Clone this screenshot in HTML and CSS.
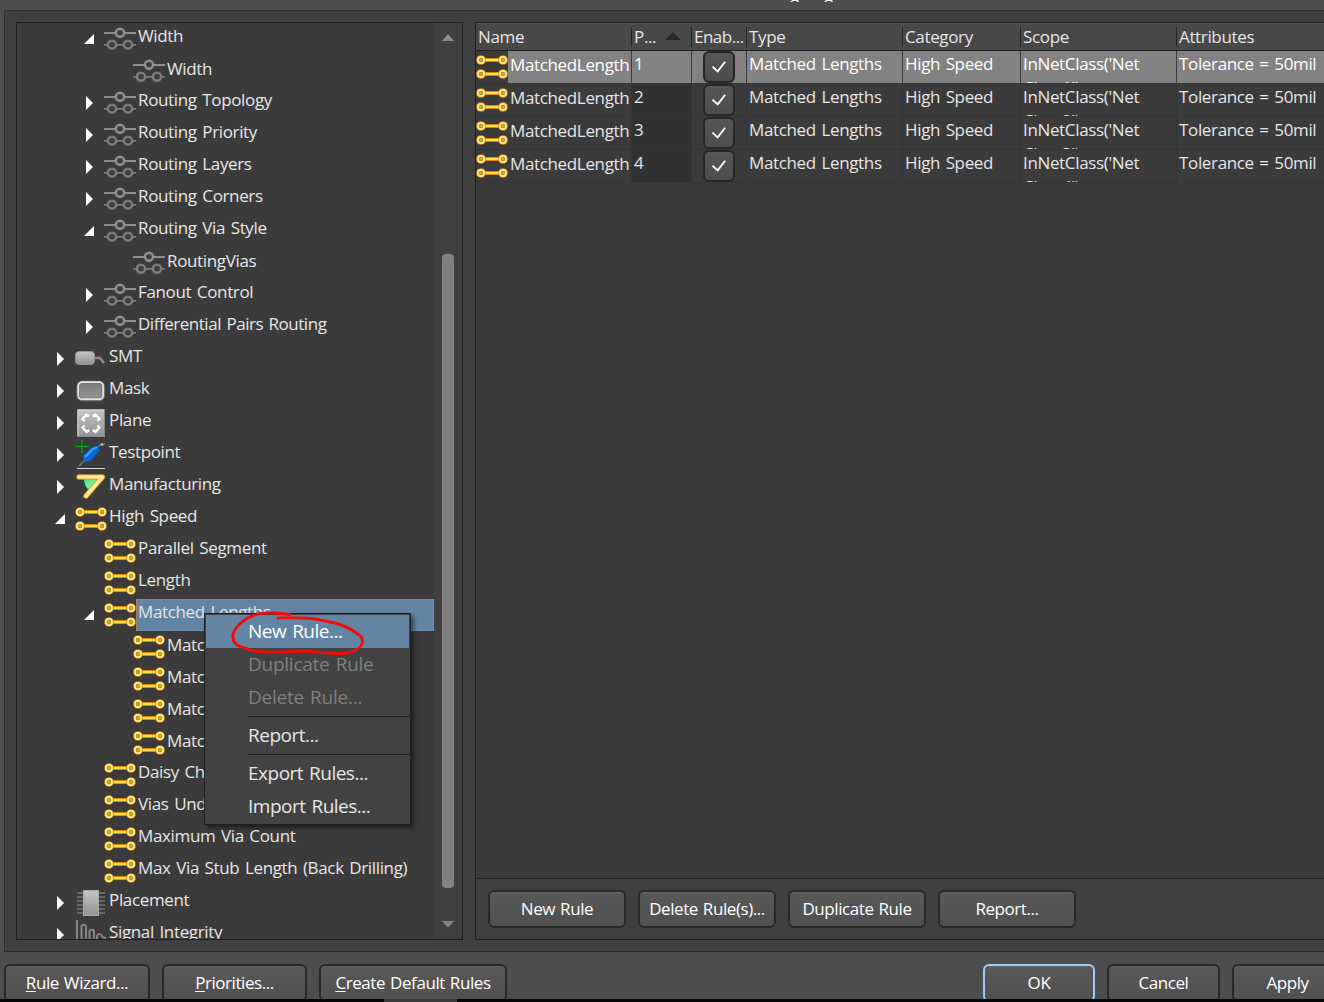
FILE: index.html
```html
<!DOCTYPE html>
<html lang="en">
<head>
<meta charset="utf-8">
<title>PCB Rules and Constraints Editor</title>
<link rel="stylesheet" href="styles.css">
</head>
<body>
<svg class="defs" aria-hidden="true">
  <defs>
    <linearGradient id="grey" x1="0" y1="0" x2="0" y2="1"><stop offset="0" stop-color="#c4c4c4"/><stop offset="1" stop-color="#939393"/></linearGradient>
    <linearGradient id="dim" x1="0" y1="0" x2="0" y2="1"><stop offset="0" stop-color="#7c7c7c"/><stop offset="1" stop-color="#969696"/></linearGradient>
    <linearGradient id="green" x1="0" y1="0" x2="1" y2="1"><stop offset="0" stop-color="#4fe07c"/><stop offset="1" stop-color="#9dffc0"/></linearGradient>
    <g id="pad"><circle r="4.8" fill="#e0860c"/><circle r="4" fill="#ffea90"/><circle r="2.2" fill="#a88a1c"/><circle r="1.3" fill="#c9b03a"/></g>
    <symbol id="gold" viewBox="0 0 32 32">
      <path d="M8 9h16M8 23h16" stroke="#e08a0a" stroke-width="4"/>
      <path d="M8 9h16M8 23h16" stroke="#ffe14a" stroke-width="2"/>
      <use href="#pad" x="5" y="9"/><use href="#pad" x="27" y="9"/><use href="#pad" x="5" y="23"/><use href="#pad" x="27" y="23"/>
    </symbol>
    <symbol id="route" viewBox="0 0 32 32">
      <g fill="none" stroke="#8f8f8f" stroke-width="2.5"><path d="M0 10h12M20 10h12" stroke-width="1.8"/><circle cx="16" cy="9.7" r="4"/></g>
      <g fill="none" stroke="#7c7c7c" stroke-width="2.5"><path d="M0 21.900h4M12 21.900h8M28 21.900h4" stroke-width="1.8"/><circle cx="8" cy="21.700" r="4"/><circle cx="24" cy="21.700" r="4"/></g>
    </symbol>
    <symbol id="smt" viewBox="0 0 32 32">
      <path d="M19 15h6l4 5" fill="none" stroke="#8a8a8a" stroke-width="2.6"/>
      <rect x=".5" y="8.5" width="19" height="13" rx="3.5" fill="url(#grey)" stroke="#999" stroke-width=".8"/>
    </symbol>
    <symbol id="mask" viewBox="0 0 32 32">
      <rect x="3.2" y="7.5" width="25" height="17" rx="4" fill="url(#dim)" stroke="#777" stroke-width="3.4"/>
      <rect x="3.2" y="7.2" width="25" height="17" rx="4" fill="none" stroke="#e6e6e6" stroke-width="1.7"/>
    </symbol>
    <symbol id="plane" viewBox="0 0 32 32">
      <rect x="2.5" y="2.5" width="27" height="27" fill="url(#grey)" stroke="#888"/>
      <path d="M3 29V3h26" fill="none" stroke="#ddd"/>
      <g fill="none" stroke="#fff" stroke-width="2.3"><path d="M9.500 14l-2-2 4-4.500 2.500 2M18 9.500l2.500-2 4 4.500-2 2M22.500 18.500l2 2-4 4.500-2.500-2M14 23l-2.500 2-4-4.500 2-2"/></g>
    </symbol>
    <symbol id="probe" viewBox="0 0 32 32">
      <path d="M4 27L26 5h4" fill="none" stroke="#777" stroke-width="1.3"/><circle cx="27" cy="5.500" r="1.500" fill="#aaa"/>
      <path d="M8.500 23l-.5-6 9-9 6.500-1.500 1 5-8.500 10z" fill="#0866dc"/>
      <path d="M10 18l8-8 4-2" fill="none" stroke="#37a9ff" stroke-width="2"/>
      <path d="M.5 7.500h13M7 1v13" stroke="#00a524" stroke-width="1.400"/>
      <path d="M2 29.500h28" stroke="#d5d5d5"/>
    </symbol>
    <symbol id="mfg" viewBox="0 0 32 32">
      <path d="M9 8c0 5 2 9 6 12l9-12z" fill="url(#green)"/>
      <g fill="none" stroke-linecap="round" stroke-linejoin="round"><path d="M4 6h23.500L11 25" stroke="#d9952c" stroke-width="5.400"/><path d="M4 6h23.500L11 25" stroke="#ffe999" stroke-width="3.700"/></g>
    </symbol>
    <symbol id="chip" viewBox="0 0 32 32">
      <path d="M2 6h28M2 10h28M2 14h28M2 18h28M2 22h28M2 26h28" stroke="#777" stroke-width="1.400"/>
      <rect x="8.500" y="3.500" width="15" height="25" fill="url(#grey)" stroke="#a9a9a9"/>
    </symbol>
    <symbol id="wave" viewBox="0 0 32 32">
      <path d="M2 1v30" stroke="#999" stroke-width="1.600"/>
      <path d="M6.500 31V8c0-3 4.500-3 4.500 0v23M14.500 31V13c0-3 4.500-3 4.500 0v18M22 31V17c1-3 4.500-2 5 0 .5 1.500 2 2 4 2" fill="none" stroke="#858585" stroke-width="2"/>
    </symbol>
    <symbol id="shut" viewBox="0 0 10 32"><path d="M2 9l7 7-7 7z" fill="#fff"/></symbol>
    <symbol id="open" viewBox="0 0 10 32"><path d="M10 11v10H0z" fill="#fff"/></symbol>
    <symbol id="tick" viewBox="0 0 32 32"><path d="M8.500 15.500l6 5.500L23 10" fill="none" stroke="#fff" stroke-width="2.100"/></symbol>
  </defs>
</svg>

<div class="window">
  <div class="titlebar"><span>g</span><span>g</span></div>
  <main class="frame">
    <section class="tree-panel">
      <ul class="tree">
        <li class="l2"><svg class="arrow"><use href="#open"/></svg><svg class="icon"><use href="#route"/></svg><span>Width</span></li>
        <li class="l3"><svg class="icon"><use href="#route"/></svg><span>Width</span></li>
        <li class="l2"><svg class="arrow"><use href="#shut"/></svg><svg class="icon"><use href="#route"/></svg><span>Routing Topology</span></li>
        <li class="l2"><svg class="arrow"><use href="#shut"/></svg><svg class="icon"><use href="#route"/></svg><span>Routing Priority</span></li>
        <li class="l2"><svg class="arrow"><use href="#shut"/></svg><svg class="icon"><use href="#route"/></svg><span>Routing Layers</span></li>
        <li class="l2"><svg class="arrow"><use href="#shut"/></svg><svg class="icon"><use href="#route"/></svg><span>Routing Corners</span></li>
        <li class="l2"><svg class="arrow"><use href="#open"/></svg><svg class="icon"><use href="#route"/></svg><span>Routing Via Style</span></li>
        <li class="l3"><svg class="icon"><use href="#route"/></svg><span>RoutingVias</span></li>
        <li class="l2"><svg class="arrow"><use href="#shut"/></svg><svg class="icon"><use href="#route"/></svg><span>Fanout Control</span></li>
        <li class="l2"><svg class="arrow"><use href="#shut"/></svg><svg class="icon"><use href="#route"/></svg><span class="narrow">Differential Pairs Routing</span></li>
        <li class="l1"><svg class="arrow"><use href="#shut"/></svg><svg class="icon"><use href="#smt"/></svg><span>SMT</span></li>
        <li class="l1"><svg class="arrow"><use href="#shut"/></svg><svg class="icon"><use href="#mask"/></svg><span>Mask</span></li>
        <li class="l1"><svg class="arrow"><use href="#shut"/></svg><svg class="icon"><use href="#plane"/></svg><span>Plane</span></li>
        <li class="l1"><svg class="arrow"><use href="#shut"/></svg><svg class="icon"><use href="#probe"/></svg><span>Testpoint</span></li>
        <li class="l1"><svg class="arrow"><use href="#shut"/></svg><svg class="icon"><use href="#mfg"/></svg><span>Manufacturing</span></li>
        <li class="l1"><svg class="arrow"><use href="#open"/></svg><svg class="icon"><use href="#gold"/></svg><span>High Speed</span></li>
        <li class="l2"><svg class="arrow"></svg><svg class="icon"><use href="#gold"/></svg><span>Parallel Segment</span></li>
        <li class="l2"><svg class="arrow"></svg><svg class="icon"><use href="#gold"/></svg><span>Length</span></li>
        <li class="l2 selected"><svg class="arrow"><use href="#open"/></svg><svg class="icon"><use href="#gold"/></svg><span>Matched Lengths</span></li>
        <li class="l3"><svg class="icon"><use href="#gold"/></svg><span>MatchedLengths</span></li>
        <li class="l3"><svg class="icon"><use href="#gold"/></svg><span>MatchedLengths</span></li>
        <li class="l3"><svg class="icon"><use href="#gold"/></svg><span>MatchedLengths</span></li>
        <li class="l3"><svg class="icon"><use href="#gold"/></svg><span>MatchedLengths</span></li>
        <li class="l2"><svg class="arrow"></svg><svg class="icon"><use href="#gold"/></svg><span>Daisy Chain</span></li>
        <li class="l2"><svg class="arrow"></svg><svg class="icon"><use href="#gold"/></svg><span>Vias Under SMD</span></li>
        <li class="l2"><svg class="arrow"></svg><svg class="icon"><use href="#gold"/></svg><span>Maximum Via Count</span></li>
        <li class="l2"><svg class="arrow"></svg><svg class="icon"><use href="#gold"/></svg><span>Max Via Stub Length (Back Drilling)</span></li>
        <li class="l1"><svg class="arrow"><use href="#shut"/></svg><svg class="icon"><use href="#chip"/></svg><span>Placement</span></li>
        <li class="l1"><svg class="arrow"><use href="#shut"/></svg><svg class="icon"><use href="#wave"/></svg><span>Signal Integrity</span></li>
      </ul>
      <div class="scrollbar"><i class="up"></i><i class="thumb"></i><i class="down"></i></div>
    </section>

    <section class="rules-panel">
      <div class="row head">
        <div>Name</div><div class="sorted">P...<i></i></div><div class="enab">Enab...</div><div>Type</div><div>Category</div><div>Scope</div><div>Attributes</div>
      </div>
      <div class="row current">
        <div class="name"><svg class="icon"><use href="#gold"/></svg><span><b>MatchedLengths</b></span></div><div class="prio">1</div><div class="check"><svg><use href="#tick"/></svg></div><div>Matched Lengths</div><div>High Speed</div><div class="scope">InNetClass('Net Class1')</div><div>Tolerance = 50mil</div>
      </div>
      <div class="row">
        <div class="name"><svg class="icon"><use href="#gold"/></svg><span><b>MatchedLengths</b></span></div><div class="prio">2</div><div class="check"><svg><use href="#tick"/></svg></div><div>Matched Lengths</div><div>High Speed</div><div class="scope">InNetClass('Net Class2')</div><div>Tolerance = 50mil</div>
      </div>
      <div class="row">
        <div class="name"><svg class="icon"><use href="#gold"/></svg><span><b>MatchedLengths</b></span></div><div class="prio">3</div><div class="check"><svg><use href="#tick"/></svg></div><div>Matched Lengths</div><div>High Speed</div><div class="scope">InNetClass('Net Class3')</div><div>Tolerance = 50mil</div>
      </div>
      <div class="row">
        <div class="name"><svg class="icon"><use href="#gold"/></svg><span><b>MatchedLengths</b></span></div><div class="prio">4</div><div class="check"><svg><use href="#tick"/></svg></div><div>Matched Lengths</div><div>High Speed</div><div class="scope">InNetClass('Net Class4')</div><div>Tolerance = 50mil</div>
      </div>
      <div class="actions">
        <button>New Rule</button><button>Delete Rule(s)...</button><button>Duplicate Rule</button><button>Report...</button>
      </div>
    </section>
  </main>
  <footer class="bottom">
    <button class="wizard"><u>R</u>ule Wizard...</button><button class="prios"><u>P</u>riorities...</button><button class="defaults"><u>C</u>reate Default Rules</button>
    <button class="ok">OK</button><button class="cancel">Cancel</button><button class="apply">Apply</button>
  </footer>
  <div class="edge"></div>

  <div class="menu">
    <div class="item active">New Rule...</div>
    <div class="item off">Duplicate Rule</div>
    <div class="item off">Delete Rule...</div>
    <hr>
    <div class="item">Report...</div>
    <hr>
    <div class="item">Export Rules...</div>
    <div class="item">Import Rules...</div>
  </div>
  <svg class="mark" viewBox="0 0 140 48"><path d="M63 6.500C48 4 31 4 23 9C13 14 5 22 6 30C7 37 12 38 18 40C31 47 60 43 78 43C100 45 119 48 129 42C136 38 138 31 132 27C124 20 111 15 98 13C85 9 70 10 51 10" /></svg>
</div>
</body>
</html>
```

FILE: styles.css
```css
* { box-sizing: border-box; }
body {
  margin: 0;
  background: #4d4d4d;
  color: #e6e6e6;
  font: 17px/22px "Open Sans", "Noto Sans", sans-serif;
  letter-spacing: -.35px;
  word-spacing: 1.500px;
  overflow: hidden;
}
.defs { position: absolute; width: 0; height: 0; }
.window {
  position: relative;
  width: 1324px;
  height: 1002px;
  overflow: hidden;
  display: flex;
  flex-direction: column;
}
.titlebar {
  height: 10px;
  padding-left: 790px;
  display: flex;
  gap: 25px;
  line-height: 10px;
  overflow: hidden;
}
.titlebar span { margin-top: -10px; height: 12px; overflow: hidden; color: #fff; }

.frame {
  margin-left: 4px;
  height: 942px;
  padding: 11px 0 11px 11px;
  display: flex;
  gap: 12px;
  background: #404040;
  border: 1px solid #2d2d2d;
  border-right: 0;
}

/* rule tree */
.tree-panel {
  flex: none;
  width: 447px;
  height: 918px;
  display: flex;
  background: #3b3b3b;
  border: 1px solid #202020;
  overflow: hidden;
}
.tree { flex: 1; margin: 0; padding: 0; list-style: none; }
.tree li { display: flex; height: 32px; }
.tree span { flex: 1; padding-left: 2px; line-height: 26px; white-space: nowrap; }
.tree .narrow { letter-spacing: -.47px; }
.l1 { padding-left: 38px; }
.l2 { padding-left: 67px; }
.l3 { padding-left: 116px; }
.tree .l3 span { line-height: 28px; }
.arrow { width: 10px; height: 32px; margin-right: 10px; flex: none; }
.icon { width: 32px; height: 32px; flex: none; display: block; }
.tree .selected span { background: #6484a4; outline: 1px dotted #b08a6a; outline-offset: -1px; }

.scrollbar {
  width: 28px;
  padding: 11px 8px 10px;
  display: flex;
  flex-direction: column;
  align-items: center;
  background: #404040;
}
.up, .down { border: 6px solid transparent; width: 0; }
.up { border-bottom: 7px solid #8c8c8c; border-top: 0; }
.down { border-top: 7px solid #808080; border-bottom: 0; }
.thumb { width: 12px; height: 634px; margin: 213px 0 33px; border-radius: 4px; background: #808080; }

/* rules grid */
.rules-panel {
  flex: none;
  width: 849px;
  display: flex;
  flex-direction: column;
  background: #3b3b3b;
  border: 1px solid #202020;
  border-right: 0;
}
.row {
  display: grid;
  grid-template-columns: 156px 60px 55px 156px 118px 156px 147px;
  height: 33px;
  border-bottom: 1px solid #353535;
}
.row > div {
  padding-left: 2px;
  line-height: 26px;
  overflow: hidden;
  white-space: nowrap;
  border-right: 1px solid #353535;
}
.row > div:last-child { border-right: 0; }
.row .scope { white-space: normal; line-height: 24px; padding-top: 1px; }
.row .name { display: flex; padding-left: 0; }
.name span { flex: 1; min-width: 0; padding: 0 2px; line-height: 28px; }
.name b { display: block; font-weight: 400; overflow: hidden; }
.row .prio { background: #313131; }
.current > div { background: #828282; color: #fff; border-right-color: #3b3b3b; }
.row.current .prio { background: #828282; }
.row.current .name { background: #3b3b3b; }
.current .name span { background: #828282; }
.row .check { padding-left: 11px; overflow: visible; }
.check svg {
  display: block;
  width: 32px;
  height: 32px;
  background: linear-gradient(#565656, #4d4d4d);
  border: 2px solid #262626;
  border-radius: 6px;
}
.row.head {
  height: 28px;
  background: #484848;
  border-top: 1px solid #555;
  border-bottom: 1px solid #232323;
}
.row.head > div { height: 20px; margin-top: 3px; line-height: 20px; border-color: #232323; }
.row.head .sorted { display: flex; }
.sorted i { width: 0; height: 7px; margin: 5px 0 0 9px; border: 8px solid transparent; border-top: 0; border-bottom: 8px solid #292929; }
.row .enab { letter-spacing: -.5px; }
.actions {
  margin-top: auto;
  height: 61px;
  padding: 11px 12px;
  display: flex;
  gap: 12px;
  background: #404040;
  border-top: 1px solid #252525;
}
button {
  height: 38px;
  padding: 0;
  color: #fff;
  font: inherit;
  letter-spacing: -.43px;
  word-spacing: 1px;
  white-space: nowrap;
  background: linear-gradient(#595959, #505050);
  border: 2px solid #292929;
  border-radius: 6px;
  box-shadow: inset 0 1px #606060;
}
.actions button { width: 138px; }

/* dialog buttons */
.bottom { display: flex; padding: 12px 0 0 4px; gap: 12px; }
.bottom button { flex: none; }
.bottom u { text-underline-offset: 2px; text-decoration-thickness: 1px; }
.wizard { width: 146px; }
.prios { width: 145px; }
.defaults { width: 188px; }
.bottom .ok { width: 112px; margin-left: 464px; border: 2px solid #9ccbfa; }
.cancel { width: 113px; }
.apply { width: 111px; }
.edge {
  position: absolute;
  left: 0;
  bottom: 0;
  width: 100%;
  height: 3px;
  background: linear-gradient(90deg, #080808 384px, #3c3c3c 384px 457px, #080808 457px);
}

/* context menu */
.menu {
  position: absolute;
  left: 204px;
  top: 613px;
  width: 207px;
  height: 212px;
  padding: 1px;
  background: #424242;
  border: 1px solid #202020;
  box-shadow: 3px 3px 4px rgba(0, 0, 0, .45);
  font-size: 19px;
  letter-spacing: -.5px;
}
.item { height: 33px; padding-left: 42px; line-height: 32px; white-space: nowrap; }
.active { background: #6484a4; color: #fff; }
.off { color: #808080; letter-spacing: -.25px; }
.menu hr { height: 1px; margin: 2px -1px 2px 42px; border: 0; background: #222; }
.mark { position: absolute; left: 227px; top: 608px; width: 140px; height: 48px; }
.mark path { fill: none; stroke: #f80808; stroke-width: 2.800; stroke-linecap: round; }
```
